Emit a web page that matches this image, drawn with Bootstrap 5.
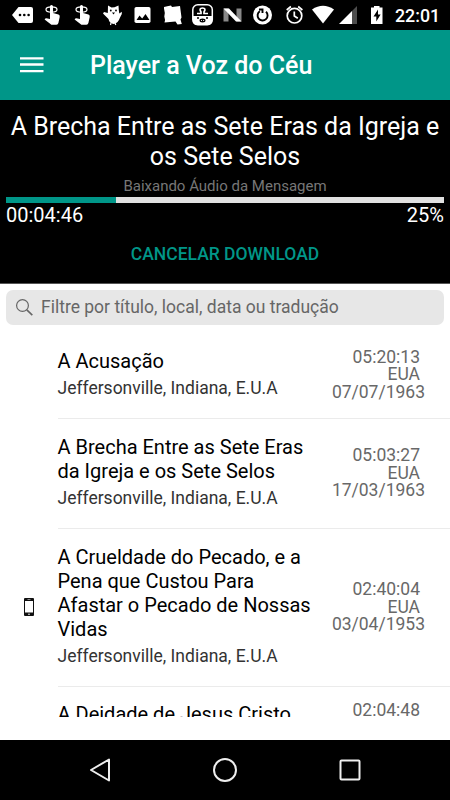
<!DOCTYPE html>
<html lang="pt-BR">
<head>
<meta charset="utf-8">
<meta name="viewport" content="width=device-width, initial-scale=1">
<title>Player a Voz do Céu</title>
<link rel="stylesheet" href="https://cdn.jsdelivr.net/npm/bootstrap@5.3.0/dist/css/bootstrap.min.css">
<style>
  :root { --teal: #009688; }
  body { font-family: Roboto, "Liberation Sans", sans-serif; color: #000; }
  .screen { width: 450px; height: 800px; }
  .statusbar { height: 30px; padding-left: 8px; }
  .statusbar svg { height: 30px; flex: none; }
  .clock { font-size: 17.8px; line-height: 32px; margin-left: 6px; font-weight: 500; }
  .appbar { height: 70px; background: var(--teal); padding-left: 20px; }
  .appbar-title { font-size: 25px; font-weight: 500; margin: 2px 0 0 46px; }
  .player { height: 184px; padding: 12px 6px 0; border-bottom: 1px solid #555; }
  .player-title { font-size: 25px; line-height: 30px; font-weight: 400; }
  .player-note { font-size: 15px; line-height: 20px; margin-top: 4px; color: #777; }
  .player .progress { height: 6px; margin-top: 1px; background: #e0e0e0; }
  .player .progress-bar { background: var(--teal); }
  .player-time { font-size: 20px; line-height: 24px; }
  .cancel { color: var(--teal); font-size: 17.5px; line-height: 24px; font-weight: 500; margin-top: 15px; }
  .filter { height: 35px; margin: 6px 6px 0; padding-left: 9px; border-radius: 7px; background: #e7e7e7; color: #666; font-size: 17.5px; }
  .filter input { font-size: inherit; color: #666; margin-left: 7px; }
  .filter input::placeholder { color: #666; opacity: 1; }
  .messages { height: 392px; }
  .message-icon { width: 57.5px; padding-left: 1px; flex: none; }
  .message-icon svg { margin-bottom: 4px; }
  .message-body { height: 100%; border-bottom: 1px solid #ebebeb; }
  .message-title { font-size: 20px; line-height: 24px; width: 262px; }
  .message-text { padding-bottom: 2px; }
  .message-place { font-size: 17.5px; line-height: 24px; margin-top: 3px; color: #333; }
  .message-meta { font-size: 17.5px; line-height: 17.5px; color: #686868; padding-right: 30px; }
  .message-date { margin-right: -5px; }
  .row-a { height: 94px; padding-top: 7px; }
  .row-b { height: 110px; }
  .row-c { height: 158px; }
  .row-d { height: 110px; padding-top: 15px; }
  .clip { height: 30px; }
  .navbuttons { height: 60px; gap: 97px; }
</style>
<script src="https://cdn.jsdelivr.net/npm/bootstrap@5.3.0/dist/js/bootstrap.bundle.min.js"></script>
</head>
<body class="m-0 bg-white overflow-hidden">
<div class="screen d-flex flex-column overflow-hidden">

  <div class="statusbar bg-black text-white d-flex">
    <svg width="30" viewBox="8 0 30 30" fill="#fff"><path d="M18.500 7H31q2 0 2 2v12q0 2-2 2H18.500L12 15z"/><g fill="#000"><circle cx="20" cy="15" r="1.300"/><circle cx="24.300" cy="15" r="1.300"/><circle cx="28.600" cy="15" r="1.300"/></g></svg>
    <svg width="30" viewBox="38 0 30 30" fill="#fff"><ellipse cx="51.500" cy="9.500" rx="5.500" ry="2.600" fill="none" stroke="#fff" stroke-width="1.200"/><path d="M50 6q1.500-2 3 0v7l5.500 1.500q1.700.5 1.200 2.500l-1.300 6q-.4 1.700-2 1.700h-5l-6.800-5.200q.8-1.800 3-1L50 19z"/></svg>
    <svg width="30" viewBox="68 0 30 30" fill="#fff"><ellipse cx="81.500" cy="9.500" rx="5.500" ry="2.600" fill="none" stroke="#fff" stroke-width="1.200"/><path d="M80 6q1.500-2 3 0v7l5.500 1.500q1.700.5 1.200 2.500l-1.300 6q-.4 1.700-2 1.700h-5l-6.800-5.200q.8-1.800 3-1L80 19z"/></svg>
    <svg width="30" viewBox="98 0 30 30" fill="#fff"><path d="M108 5.500l3.500 2 3-.2 4-1.800.3 4.500.5 3.500 2.500-1.800v2.300l-2 4q-1.500 5-6 6-4.500-.5-5.300-5l-5.500-5.500 1-1.500 3.800 1z"/><path d="M111 23l-.5 2M115 23l.8 2" stroke="#fff" stroke-width="1.200"/><g fill="#000"><circle cx="110.800" cy="10.500" r=".9"/><circle cx="116" cy="10.500" r=".9"/><path d="M112 12.500h3l-1.500 2z"/></g></svg>
    <svg width="30" viewBox="128 0 30 30"><rect x="134.500" y="7" width="16" height="16" rx="1.800" fill="#fff"/><path d="M136.500 20l3-4.500 2.700 3 3.300-4.500 4 6z" fill="#000"/></svg>
    <svg width="30" viewBox="158 0 30 30" fill="#fff"><path d="M164 7q3-1 7-1.500l1 1.500 8-1 1.500 11.500-1 2 1.300 4.500-4.300.5-2-3-11 1q1-3-.2-6 1-4-.3-8z"/></svg>
    <svg width="30" viewBox="188 0 30 30"><rect x="192.800" y="4.800" width="19.500" height="20" rx="5" fill="#000" stroke="#fff" stroke-width="1.500"/><path d="M193 16h19v5q0 4-4 4h-11q-4 0-4-4z" fill="#fff"/><path d="M197 13.500h4v-1.500q-2.500-4 1.500-4t1.500 4v1.500h4" stroke="#fff" stroke-width="1.700" fill="none"/><ellipse cx="202.500" cy="20.500" rx="3" ry="1.900" fill="#000"/><path d="M201 20.500h.9M203.200 20.500h.9" stroke="#fff"/><circle cx="198" cy="18" r="1"/><circle cx="207" cy="18" r="1"/></svg>
    <svg width="30" viewBox="218 0 30 30"><path d="M223.500 8.500h5v13h-5zM236.500 8.500h5v13h-5z" fill="#888"/><path d="M223.500 8.500h5.500l12.500 13h-5.500z" fill="#fff"/></svg>
    <svg width="30" viewBox="248 0 30 30"><circle cx="262.500" cy="15" r="9.500" fill="#fff"/><path d="M266 11.800a5 5 0 1 1-6.200-.5M259 9.500h3.500v3.500" fill="none" stroke="#000" stroke-width="1.900"/></svg>
    <svg width="30" viewBox="278 0 30 30" fill="none" stroke="#fff" stroke-width="1.700"><circle cx="294.500" cy="15.700" r="7.300"/><path d="M294.300 11.500V16l3.500 2.300M286.700 10l4.200-3.500M298.200 6.500l4.200 3.500"/></svg>
    <svg width="30" viewBox="308 0 30 30"><path d="M312 9.500Q323 2 334 9.500L323 23.500z" fill="#fff"/></svg>
    <svg width="27" viewBox="338 0 27 30"><path d="M339 24L352 11v13z" fill="#fff"/><path d="M352 11l5-5v18h-5z" fill="#4d4d4d"/></svg>
    <svg width="24" viewBox="365 0 24 30"><path d="M371 7.500h3V6h5.500v1.500h3v16.500H371z" fill="#fff"/><path d="M378 9.500l-4.500 7h2.800v5l4.300-7h-2.600z" fill="#000"/></svg>
    <span class="clock">22:01</span>
  </div>

  <nav class="appbar d-flex align-items-center text-white">
    <svg width="24" height="18" viewBox="0 0 24 18" fill="#fff"><path d="M0 1.200h23.500v2.300H0zM0 7.300h23.500v2.400H0zM0 14h23.500v2.300H0z"/></svg>
    <span class="appbar-title text-nowrap">Player a Voz do Céu</span>
  </nav>

  <section class="player bg-black text-white text-center">
    <h1 class="player-title m-0">A Brecha Entre as Sete Eras da Igreja e<br>os Sete Selos</h1>
    <div class="player-note">Baixando Áudio da Mensagem</div>
    <div class="progress rounded-0" role="progressbar" aria-valuenow="25" aria-valuemin="0" aria-valuemax="100">
      <div class="progress-bar" style="width:25%"></div>
    </div>
    <div class="player-time d-flex justify-content-between"><span>00:04:46</span><span>25%</span></div>
    <button type="button" class="cancel btn p-0 border-0">CANCELAR DOWNLOAD</button>
  </section>

  <div class="filter d-flex align-items-center flex-shrink-0">
    <svg width="19" height="19" viewBox="0 0 19 19" fill="none" stroke="#666" stroke-width="1.200"><circle cx="7.500" cy="7.500" r="5.900"/><path d="M11.800 11.800l5.500 5.300" stroke-width="1.600"/></svg>
    <input class="border-0 bg-transparent p-0 flex-grow-1" type="text" placeholder="Filtre por título, local, data ou tradução">
  </div>

  <main class="messages overflow-hidden">
    <article class="row-a d-flex align-items-center">
      <div class="message-icon"></div>
      <div class="message-body flex-grow-1 d-flex align-items-center justify-content-between">
        <div class="message-text"><div class="message-title">A Acusação</div><div class="message-place">Jeffersonville, Indiana, E.U.A</div></div>
        <div class="message-meta text-end"><div>05:20:13</div><div>EUA</div><div class="message-date">07/07/1963</div></div>
      </div>
    </article>
    <article class="row-b d-flex align-items-center">
      <div class="message-icon"></div>
      <div class="message-body flex-grow-1 d-flex align-items-center justify-content-between">
        <div class="message-text"><div class="message-title">A Brecha Entre as Sete Eras<br>da Igreja e os Sete Selos</div><div class="message-place">Jeffersonville, Indiana, E.U.A</div></div>
        <div class="message-meta text-end"><div>05:03:27</div><div>EUA</div><div class="message-date">17/03/1963</div></div>
      </div>
    </article>
    <article class="row-c d-flex align-items-center">
      <div class="message-icon text-center"><svg width="10" height="18" viewBox="0 0 10 18"><rect width="10" height="18" rx="1" fill="#111"/><path d="M1 3h8v11.500H1z" fill="#fff"/><path d="M3.500 1.500h3" stroke="#aaa" stroke-width=".8"/><circle cx="5" cy="16.200" r=".8" fill="#fff"/></svg></div>
      <div class="message-body flex-grow-1 d-flex align-items-center justify-content-between">
        <div class="message-text"><div class="message-title">A Crueldade do Pecado, e a<br>Pena que Custou Para<br>Afastar o Pecado de Nossas<br>Vidas</div><div class="message-place">Jeffersonville, Indiana, E.U.A</div></div>
        <div class="message-meta text-end"><div>02:40:04</div><div>EUA</div><div class="message-date">03/04/1953</div></div>
      </div>
    </article>
    <div class="clip overflow-hidden">
      <article class="row-d d-flex">
        <div class="message-icon"></div>
        <div class="flex-grow-1 d-flex justify-content-between">
          <div class="message-title">A Deidade de Jesus Cristo</div>
          <div class="message-meta text-end"><div>02:04:48</div></div>
        </div>
      </article>
    </div>
  </main>

  <footer class="navbuttons bg-black d-flex justify-content-center align-items-center flex-shrink-0 mt-auto">
    <svg width="28" height="28" viewBox="0 0 28 28" fill="none" stroke="#eee" stroke-width="2" stroke-linejoin="round"><path d="M5 14L23 3.500v21z"/></svg>
    <svg width="28" height="28" viewBox="0 0 28 28" fill="none" stroke="#eee" stroke-width="2"><circle cx="14" cy="14" r="11"/></svg>
    <svg width="28" height="28" viewBox="0 0 28 28" fill="none" stroke="#eee" stroke-width="2"><rect x="4.500" y="4.500" width="19" height="19" rx="1"/></svg>
  </footer>
</div>
</body>
</html>
